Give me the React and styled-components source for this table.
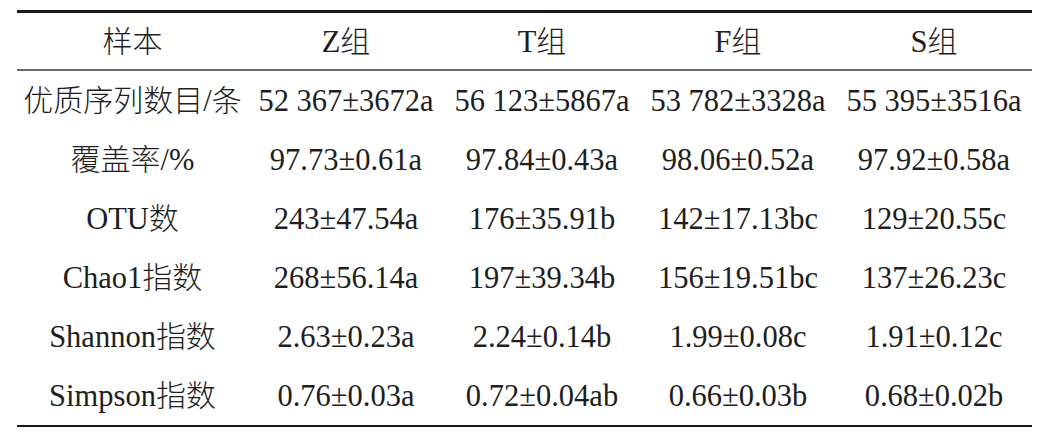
import React from "react";
import styled, { createGlobalStyle } from "styled-components";

const GlobalStyle = createGlobalStyle`
  html, body {
    margin: 0;
    padding: 0;
    background: #fff;
  }
  body {
    font-family: "Liberation Serif", serif;
    color: #1e1e1e;
  }
`;

const header = ["样本", "Z组", "T组", "F组", "S组"];

const rows = [
  ["优质序列数目/条", "52 367±3672a", "56 123±5867a", "53 782±3328a", "55 395±3516a"],
  ["覆盖率/%", "97.73±0.61a", "97.84±0.43a", "98.06±0.52a", "97.92±0.58a"],
  ["OTU数", "243±47.54a", "176±35.91b", "142±17.13bc", "129±20.55c"],
  ["Chao1指数", "268±56.14a", "197±39.34b", "156±19.51bc", "137±26.23c"],
  ["Shannon指数", "2.63±0.23a", "2.24±0.14b", "1.99±0.08c", "1.91±0.12c"],
  ["Simpson指数", "0.76±0.03a", "0.72±0.04ab", "0.66±0.03b", "0.68±0.02b"],
];

const Page = styled.div`
  padding: 10px 0 0 17px;
`;

const Table = styled.div`
  width: 1015px;
  border-top: 3px solid #1a1a1a;
  border-bottom: 2px solid #1a1a1a;
`;

const Row = styled.div`
  display: grid;
  grid-template-columns: 231px 196px 196px 196px 196px;
  height: ${(p) => (p.$head ? "56px" : "59px")};
  border-bottom: ${(p) => (p.$head ? "2px solid #6a6a6a" : "none")};
`;

const Cell = styled.div`
  display: flex;
  align-items: center;
  justify-content: center;
`;

const Label = styled.span`
  font-family: "Liberation Serif", serif;
  font-size: 30.5px;
  line-height: 34px;
  white-space: nowrap;
`;

const Han = styled.span`
  font-family: "Noto Sans CJK SC", sans-serif;
  font-size: 30px;
  font-weight: 300;
  line-height: 1;
`;

// split a label into latin and chinese runs
const renderText = (text) =>
  text.split(/([\u4e00-\u9fff]+)/).filter(Boolean).map((part, i) =>
    /[\u4e00-\u9fff]/.test(part) ? <Han key={i}>{part}</Han> : part
  );

const App = () => {
  return (
    <Page>
      <GlobalStyle />
      <Table>
        <Row $head>
          {header.map((h) => (
            <Cell key={h}>
              <Label>{renderText(h)}</Label>
            </Cell>
          ))}
        </Row>
        {rows.map((r) => (
          <Row key={r[0]}>
            {r.map((c, i) => (
              <Cell key={i}>
                <Label>{renderText(c)}</Label>
              </Cell>
            ))}
          </Row>
        ))}
      </Table>
    </Page>
  );
};

export default App;
